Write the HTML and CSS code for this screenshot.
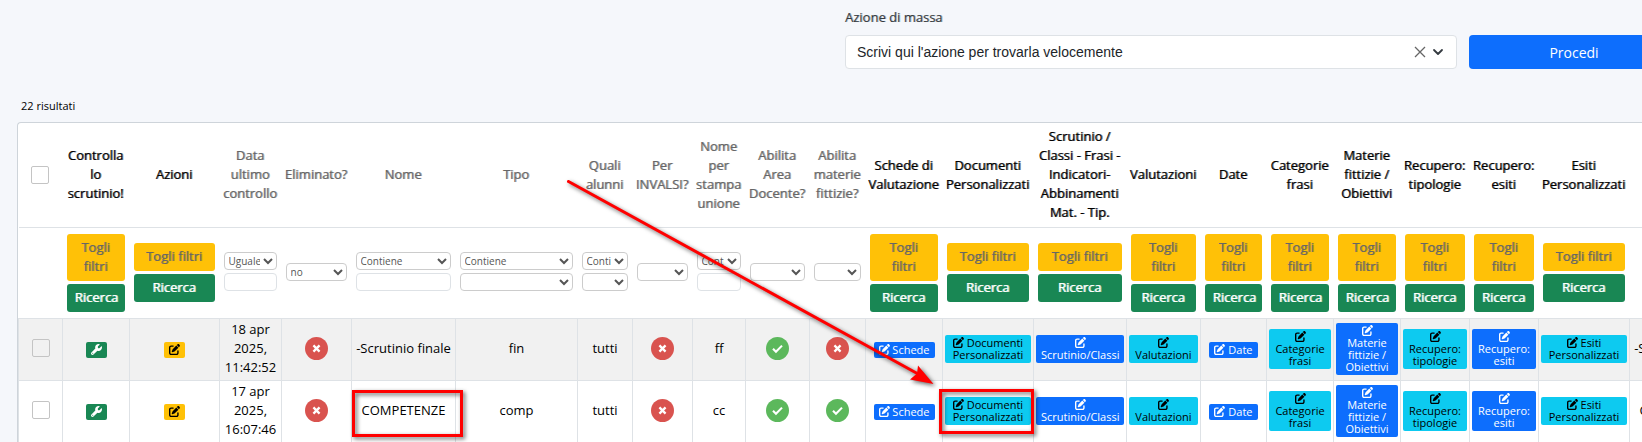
FILE: index.html
```html
<!DOCTYPE html>
<html lang="it">
<head>
<meta charset="utf-8">
<title>Scrutini</title>
<link rel="stylesheet" href="styles.css">
</head>
<body>
<svg class="sprite" aria-hidden="true">
  <symbol id="edit" viewBox="0 0 512 512"><path fill="currentColor" d="M471.600 21.700c-21.900-21.900-57.300-21.900-79.200 0L362.300 51.700l97.900 97.900 30.100-30.100c21.900-21.900 21.900-57.300 0-79.200L471.600 21.700zm-299.200 220c-6.100 6.100-10.800 13.600-13.500 21.900l-29.600 88.800c-2.900 8.600-.6 18.100 5.800 24.600s15.900 8.700 24.600 5.800l88.800-29.600c8.200-2.700 15.700-7.400 21.900-13.500L437.700 172.300 339.700 74.300 172.400 241.700zM96 64C43 64 0 107 0 160V416c0 53 43 96 96 96H352c53 0 96-43 96-96V320c0-17.700-14.300-32-32-32s-32 14.300-32 32v96c0 17.700-14.300 32-32 32H96c-17.700 0-32-14.300-32-32V160c0-17.700 14.300-32 32-32h96c17.700 0 32-14.300 32-32s-14.300-32-32-32H96z"/></symbol>
  <symbol id="wrench" viewBox="0 0 512 512"><path fill="currentColor" d="M352 320c88.400 0 160-71.600 160-160c0-15.300-2.200-30.100-6.200-44.200c-3.100-10.800-16.400-13.200-24.300-5.300l-76.800 76.800c-3 3-7.100 4.700-11.300 4.700H336c-8.800 0-16-7.200-16-16V118.600c0-4.200 1.700-8.300 4.700-11.300l76.800-76.800c7.900-7.900 5.400-21.200-5.300-24.300C382.100 2.200 367.300 0 352 0C263.600 0 192 71.600 192 160c0 19.100 3.400 37.500 9.500 54.500L19.900 396.100C7.200 408.800 0 426.100 0 444.100C0 481.600 30.400 512 67.900 512c18 0 35.300-7.200 48-19.900L297.500 310.500c17 6.200 35.400 9.500 54.500 9.500zM80 408a24 24 0 1 1 0 48 24 24 0 1 1 0-48z"/></symbol>
  <symbol id="no" viewBox="0 0 24 24"><circle cx="12" cy="12" r="12" fill="#d9534f"/><path d="M8.800 8.800l6.400 6.400M15.200 8.800l-6.400 6.400" stroke="#fff" stroke-width="2.400"/></symbol>
  <symbol id="yes" viewBox="0 0 24 24"><circle cx="12" cy="12" r="12" fill="#5cb85c"/><path d="M7.300 12.300l3.100 3.100 6.300-6.400" fill="none" stroke="#fff" stroke-width="2.200"/></symbol>
</svg>

<form class="toolbar">
  <label class="toolbar-label" for="azione">Azione di massa</label>
  <div class="combo">
    <input id="azione" type="text" value="Scrivi qui l'azione per trovarla velocemente">
    <button type="button" class="combo-btn" aria-label="Cancella"><svg width="12" height="12" viewBox="0 0 12 12"><path d="M1 1l10 10M11 1L1 11" stroke="#666" stroke-width="1.300"/></svg></button>
    <button type="button" class="combo-btn" aria-label="Apri"><svg width="12" height="12" viewBox="0 0 12 12"><path d="M2 4l4 4 4-4" fill="none" stroke="#343a40" stroke-width="1.800" stroke-linecap="round" stroke-linejoin="round"/></svg></button>
  </div>
  <button type="button" class="submit">Procedi</button>
</form>

<p class="count">22 risultati</p>

<div class="results">
<table>
  <colgroup>
    <col class="w44"><col class="w67"><col class="w90"><col class="w62"><col class="w70"><col class="w104"><col class="w122"><col class="w55"><col class="w60"><col class="w53"><col class="w64"><col class="w56"><col class="w77"><col class="w91"><col class="w93"><col class="w74"><col class="w66"><col class="w67"><col class="w67"><col class="w69"><col class="w69"><col class="w91"><col class="w104">
  </colgroup>
  <thead>
    <tr class="heads">
      <th><input type="checkbox" aria-label="Seleziona tutti"></th>
      <th>Controlla lo scrutinio!</th>
      <th>Azioni</th>
      <th class="sortable">Data ultimo controllo</th>
      <th class="sortable">Eliminato?</th>
      <th class="sortable">Nome</th>
      <th class="sortable">Tipo</th>
      <th class="sortable">Quali alunni</th>
      <th class="sortable">Per INVALSI?</th>
      <th class="sortable">Nome per stampa unione</th>
      <th class="sortable">Abilita Area Docente?</th>
      <th class="sortable">Abilita materie fittizie?</th>
      <th>Schede di Valutazione</th>
      <th>Documenti Personalizzati</th>
      <th>Scrutinio / Classi - Frasi - Indicatori-Abbinamenti Mat. - Tip.</th>
      <th>Valutazioni</th>
      <th>Date</th>
      <th>Categorie frasi</th>
      <th>Materie fittizie / Obiettivi</th>
      <th>Recupero: tipologie</th>
      <th>Recupero: esiti</th>
      <th>Esiti Personalizzati</th>
      <th></th>
    </tr>
    <tr class="filters">
      <td></td>
      <td><button class="clear">Togli filtri</button><button class="search">Ricerca</button></td>
      <td><button class="clear">Togli filtri</button><button class="search">Ricerca</button></td>
      <td class="fields"><select aria-label="Operatore data"><option>Uguale</option></select><input type="text" aria-label="Data"></td>
      <td class="fields"><select aria-label="Eliminato"><option>no</option></select></td>
      <td class="fields"><select aria-label="Operatore nome"><option>Contiene</option></select><input type="text" aria-label="Nome"></td>
      <td class="fields"><select aria-label="Operatore tipo"><option>Contiene</option></select><select aria-label="Tipo"><option></option></select></td>
      <td class="fields"><select aria-label="Operatore alunni"><option>Contiene</option></select><select aria-label="Quali alunni"><option></option></select></td>
      <td class="fields"><select aria-label="Per INVALSI"><option></option></select></td>
      <td class="fields"><select aria-label="Operatore stampa"><option>Contiene</option></select><input type="text" aria-label="Nome per stampa unione"></td>
      <td class="fields"><select aria-label="Abilita Area Docente"><option></option></select></td>
      <td class="fields"><select aria-label="Abilita materie fittizie"><option></option></select></td>
      <td><button class="clear">Togli filtri</button><button class="search">Ricerca</button></td>
      <td><button class="clear">Togli filtri</button><button class="search">Ricerca</button></td>
      <td><button class="clear">Togli filtri</button><button class="search">Ricerca</button></td>
      <td><button class="clear">Togli filtri</button><button class="search">Ricerca</button></td>
      <td><button class="clear">Togli filtri</button><button class="search">Ricerca</button></td>
      <td><button class="clear">Togli filtri</button><button class="search">Ricerca</button></td>
      <td><button class="clear">Togli filtri</button><button class="search">Ricerca</button></td>
      <td><button class="clear">Togli filtri</button><button class="search">Ricerca</button></td>
      <td><button class="clear">Togli filtri</button><button class="search">Ricerca</button></td>
      <td><button class="clear">Togli filtri</button><button class="search">Ricerca</button></td>
      <td></td>
    </tr>
  </thead>
  <tbody>
    <tr>
      <td><input type="checkbox" aria-label="Seleziona -Scrutinio finale"></td>
      <td><button class="tag green" aria-label="Controlla"><svg class="ico"><use href="#wrench"/></svg></button></td>
      <td><button class="tag yellow" aria-label="Modifica"><svg class="ico"><use href="#edit"/></svg></button></td>
      <td>18 apr 2025, 11:42:52</td>
      <td><svg class="state"><use href="#no"/></svg></td>
      <td>-Scrutinio finale</td>
      <td>fin</td>
      <td>tutti</td>
      <td><svg class="state"><use href="#no"/></svg></td>
      <td>ff</td>
      <td><svg class="state"><use href="#yes"/></svg></td>
      <td><svg class="state"><use href="#no"/></svg></td>
      <td><button class="tag blue"><svg class="ico"><use href="#edit"/></svg> Schede</button></td>
      <td><button class="tag cyan"><svg class="ico"><use href="#edit"/></svg> Documenti Personalizzati</button></td>
      <td><button class="tag blue"><svg class="ico"><use href="#edit"/></svg> Scrutinio/Classi</button></td>
      <td><button class="tag cyan"><svg class="ico"><use href="#edit"/></svg> Valutazioni</button></td>
      <td><button class="tag blue"><svg class="ico"><use href="#edit"/></svg> Date</button></td>
      <td><button class="tag cyan"><svg class="ico"><use href="#edit"/></svg> Categorie frasi</button></td>
      <td><button class="tag blue"><svg class="ico"><use href="#edit"/></svg> Materie fittizie / Obiettivi</button></td>
      <td><button class="tag cyan"><svg class="ico"><use href="#edit"/></svg> Recupero: tipologie</button></td>
      <td><button class="tag blue"><svg class="ico"><use href="#edit"/></svg> Recupero: esiti</button></td>
      <td><button class="tag cyan"><svg class="ico"><use href="#edit"/></svg> Esiti Personalizzati</button></td>
      <td>-Scrutinio finale</td>
    </tr>
    <tr>
      <td><input type="checkbox" aria-label="Seleziona COMPETENZE"></td>
      <td><button class="tag green" aria-label="Controlla"><svg class="ico"><use href="#wrench"/></svg></button></td>
      <td><button class="tag yellow" aria-label="Modifica"><svg class="ico"><use href="#edit"/></svg></button></td>
      <td>17 apr 2025, 16:07:46</td>
      <td><svg class="state"><use href="#no"/></svg></td>
      <td>COMPETENZE</td>
      <td>comp</td>
      <td>tutti</td>
      <td><svg class="state"><use href="#no"/></svg></td>
      <td>cc</td>
      <td><svg class="state"><use href="#yes"/></svg></td>
      <td><svg class="state"><use href="#yes"/></svg></td>
      <td><button class="tag blue"><svg class="ico"><use href="#edit"/></svg> Schede</button></td>
      <td><button class="tag cyan"><svg class="ico"><use href="#edit"/></svg> Documenti Personalizzati</button></td>
      <td><button class="tag blue"><svg class="ico"><use href="#edit"/></svg> Scrutinio/Classi</button></td>
      <td><button class="tag cyan"><svg class="ico"><use href="#edit"/></svg> Valutazioni</button></td>
      <td><button class="tag blue"><svg class="ico"><use href="#edit"/></svg> Date</button></td>
      <td><button class="tag cyan"><svg class="ico"><use href="#edit"/></svg> Categorie frasi</button></td>
      <td><button class="tag blue"><svg class="ico"><use href="#edit"/></svg> Materie fittizie / Obiettivi</button></td>
      <td><button class="tag cyan"><svg class="ico"><use href="#edit"/></svg> Recupero: tipologie</button></td>
      <td><button class="tag blue"><svg class="ico"><use href="#edit"/></svg> Recupero: esiti</button></td>
      <td><button class="tag cyan"><svg class="ico"><use href="#edit"/></svg> Esiti Personalizzati</button></td>
      <td>COMPETENZE</td>
    </tr>
  </tbody>
</table>
</div>

<svg class="marks" viewBox="0 0 1642 442" width="1642" height="442" aria-hidden="true">
  <g fill="none" stroke="#f00" stroke-width="3">
    <rect x="353.500" y="391.500" width="108" height="44"/>
    <rect x="940.500" y="390.500" width="92" height="42"/>
    <path d="M568.500 181.500L920 375" stroke-linecap="round"/>
  </g>
  <path d="M933.500 384L918 365.500L917 373.500L910 379.500Z" fill="#f00"/>
</svg>
</body>
</html>
```

FILE: styles.css
```css
* { box-sizing: border-box; }

body {
  margin: 0;
  overflow: hidden;
  position: relative;
  background: #f5f7fb;
  color: #000;
  font: 13px/19px "Open Sans", "Noto Sans", sans-serif;
}

button, input, select { font-family: inherit; margin: 0; }
button { border: 0; cursor: pointer; }
.sprite { display: none; }

.toolbar {
  display: grid;
  grid-template-columns: 815fr 612fr 210fr;
  column-gap: 12px;
  row-gap: 8px;
  margin: 0 -37px 0 18px;
  padding-top: 8px;
}
.toolbar-label { grid-column: 2 / 4; color: #343a40; text-shadow: 1px 0 rgba(52, 58, 64, .4); }
.combo {
  grid-column: 2;
  display: flex;
  align-items: center;
  gap: 6px;
  height: 34px;
  padding: 0 12px 0 11px;
  background: #fff;
  border: 1px solid #dee2e6;
  border-radius: 4px;
}
.combo input {
  flex: 1;
  min-width: 0;
  padding: 0;
  border: 0;
  background: none;
  color: #212529;
  font: 14px "Liberation Sans", Arial, sans-serif;
}
.combo-btn { display: flex; padding: 0; background: none; }
.submit {
  background: #0d6efd;
  color: #fff;
  border-radius: 4px;
  font-size: 14px;
}

.count { margin: 28px 0 0 21px; font-size: 11px; line-height: 18px; }

.results {
  margin: 7px 0 0 17px;
  border: 1px solid #ced4da;
  border-right: 0;
  border-radius: 4px 0 0 0;
  border-bottom: 0;
  background: #fff;
  overflow: hidden;
}

table { border-collapse: collapse; table-layout: fixed; width: 1715px; }
.w44 { width: 44px; } .w53 { width: 53px; } .w55 { width: 55px; } .w56 { width: 56px; }
.w60 { width: 60px; } .w62 { width: 62px; } .w64 { width: 64px; } .w66 { width: 66px; }
.w67 { width: 67px; } .w69 { width: 69px; } .w70 { width: 70px; } .w74 { width: 74px; }
.w77 { width: 77px; } .w90 { width: 90px; } .w91 { width: 91px; } .w93 { width: 93px; }
.w104 { width: 104px; } .w122 { width: 122px; }

th, td { padding: 0; text-align: center; vertical-align: middle; }
th { height: 104px; padding-right: 1px; font-weight: 400; text-shadow: 1px 0 rgba(0, 0, 0, .6); }
th.sortable { color: #666; text-shadow: 1px 0 rgba(102, 102, 102, .6); }
.filters td { height: 91px; padding: 0 5px 0 4px; border-top: 1px solid #dee2e6; }
.filters .fields { padding-bottom: 2px; }
tbody td { height: 62px; padding: 1px 2px 3px; border: 1px solid #dee2e6; }
tbody tr:nth-child(odd) { background: #f1f1f1; }

input[type="checkbox"] {
  appearance: none;
  display: block;
  width: 18px;
  height: 18px;
  margin: 0 auto;
  border: 1px solid #c4c4c4;
  border-radius: 2px;
}

.clear, .search {
  display: block;
  width: 100%;
  padding: 4px 8px 5px;
  border-radius: 3px;
  font-size: 13px;
  line-height: 19px;
  font-weight: 400;
}
.clear { background: #ffc107; color: #666; margin-bottom: 3px; text-shadow: 1px 0 rgba(102, 102, 102, .6); }
.search { background: #198754; color: #fff; text-shadow: 1px 0 rgba(255, 255, 255, .8); }

.filters select, .filters input {
  display: block;
  width: 100%;
  height: 18px;
  padding: 0;
  border: 1px solid #ccc;
  border-radius: 4px;
  background: #fff;
  color: #555;
  font-size: 10px;
}
.filters input { border-color: #dee2e6; }
.filters select + select, .filters select + input { margin-top: 3px; }

.tag {
  display: inline-block;
  margin-top: 1px;
  padding: 2px 5px;
  border-radius: 2px;
  font-size: 11px;
  line-height: 12px;
  max-width: 100%;
  vertical-align: middle;
}
.green { background: #198754; color: #fff; }
.yellow { background: #ffc107; color: #000; }
.blue { background: #0d6efd; color: #fff; }
.cyan { background: #0dcaf0; color: #000; }
.ico { width: 11px; height: 11px; vertical-align: -1px; }
.state { display: block; width: 23px; height: 23px; margin: 0 auto; }

.marks {
  position: absolute;
  top: 0;
  left: 0;
  pointer-events: none;
  filter: drop-shadow(2px 2px 2px rgba(0, 0, 0, .6));
}
```
